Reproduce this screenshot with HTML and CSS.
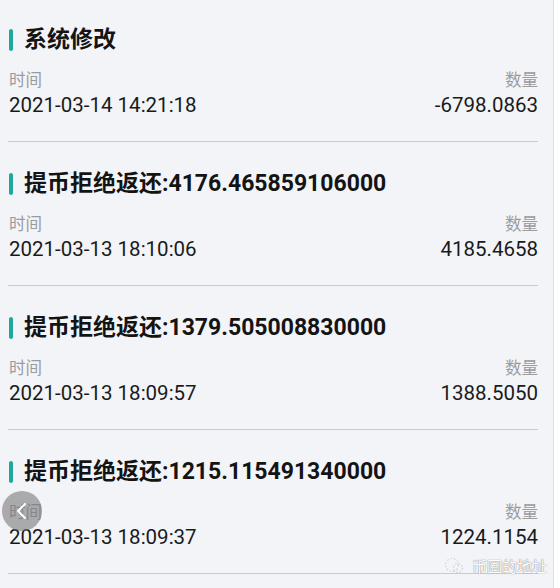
FILE: index.html
```html
<!DOCTYPE html>
<html lang="zh-CN">
<head>
    <meta charset="UTF-8">
    <meta name="viewport" content="width=device-width, initial-scale=1.0">
    <title>资产记录</title>
    <link rel="stylesheet" href="styles.css">
</head>
<body>
<div class="page">

    <!-- Record list -->
    <div class="record">
        <h3 class="record-title">系统修改</h3>
        <div class="record-row label">
            <span>时间</span>
            <span>数量</span>
        </div>
        <div class="record-row value">
            <span>2021-03-14 14:21:18</span>
            <span>-6798.0863</span>
        </div>
    </div>

    <div class="record">
        <h3 class="record-title">提币拒绝返还:4176.465859106000</h3>
        <div class="record-row label">
            <span>时间</span>
            <span>数量</span>
        </div>
        <div class="record-row value">
            <span>2021-03-13 18:10:06</span>
            <span>4185.4658</span>
        </div>
    </div>

    <div class="record">
        <h3 class="record-title">提币拒绝返还:1379.505008830000</h3>
        <div class="record-row label">
            <span>时间</span>
            <span>数量</span>
        </div>
        <div class="record-row value">
            <span>2021-03-13 18:09:57</span>
            <span>1388.5050</span>
        </div>
    </div>

    <div class="record">
        <h3 class="record-title">提币拒绝返还:1215.115491340000</h3>
        <div class="record-row label">
            <span>时间</span>
            <span>数量</span>
        </div>
        <div class="record-row value">
            <span>2021-03-13 18:09:37</span>
            <span>1224.1154</span>
        </div>
    </div>

    <!-- Floating back button -->
    <div class="back-btn">
        <svg width="14" height="20" viewBox="0 0 14 20">
            <path d="M10 3 L3 10 L10 17" fill="none" stroke="#fff" stroke-width="2" stroke-linecap="round" stroke-linejoin="round"/>
        </svg>
    </div>

    <!-- Watermark -->
    <div class="watermark">
        <svg width="20" height="18" viewBox="0 0 20 18">
            <circle cx="8" cy="8" r="6.5" fill="none" stroke="#d8d8dc" stroke-width="1.2" stroke-dasharray="2 1.5"/>
            <circle cx="14" cy="11" r="4.5" fill="none" stroke="#d8d8dc" stroke-width="1.2" stroke-dasharray="2 1.5"/>
        </svg>
        <span>币圈的地址</span>
    </div>
</div>
</body>
</html>
```

FILE: styles.css
```css
body {
    margin: 0;
    background: #ffffff;
    font-family: Roboto, "Noto Sans CJK SC", sans-serif;
}
.page {
    position: relative;
    width: 553px;
    height: 588px;
    overflow: hidden;
    background: #f3f4f8;
    border-right: 1px solid #dedfe3;
}
.record {
    margin: 0 15px 0 8px;
    padding: 27px 0 24px 1px;
    border-bottom: 1px solid #c9cacf;
}
.record:first-child {
    padding-top: 25px;
}
.record-title {
    position: relative;
    margin: 0;
    padding-left: 15px;
    height: 30px;
    line-height: 30px;
    font-size: 23px;
    font-weight: bold;
    color: #141414;
}
.record-title::before {
    content: "";
    position: absolute;
    left: 0;
    top: 4px;
    width: 4px;
    height: 22px;
    border-radius: 2px;
    background: #1fa89b;
}
.record-row {
    display: flex;
    justify-content: space-between;
}
.record-row.label {
    margin-top: 16px;
    height: 20px;
    line-height: 20px;
    font-size: 16.5px;
    color: #9b9b9f;
}
.record-row.value {
    margin-top: 2px;
    height: 24px;
    line-height: 24px;
    font-size: 20.5px;
    color: #1a1a1a;
}
.back-btn {
    position: absolute;
    left: 2px;
    top: 491px;
    width: 40px;
    height: 40px;
    border-radius: 50%;
    background: rgba(120, 120, 122, 0.6);
    display: flex;
    align-items: center;
    justify-content: center;
}
.watermark {
    position: absolute;
    left: 444px;
    top: 555px;
    display: flex;
    align-items: center;
    gap: 8px;
}
.watermark span {
    font-size: 15px;
    color: #ffffff;
    text-shadow: 0 0 1px #8a8a8e, 0 0 1px #8a8a8e;
}
```
